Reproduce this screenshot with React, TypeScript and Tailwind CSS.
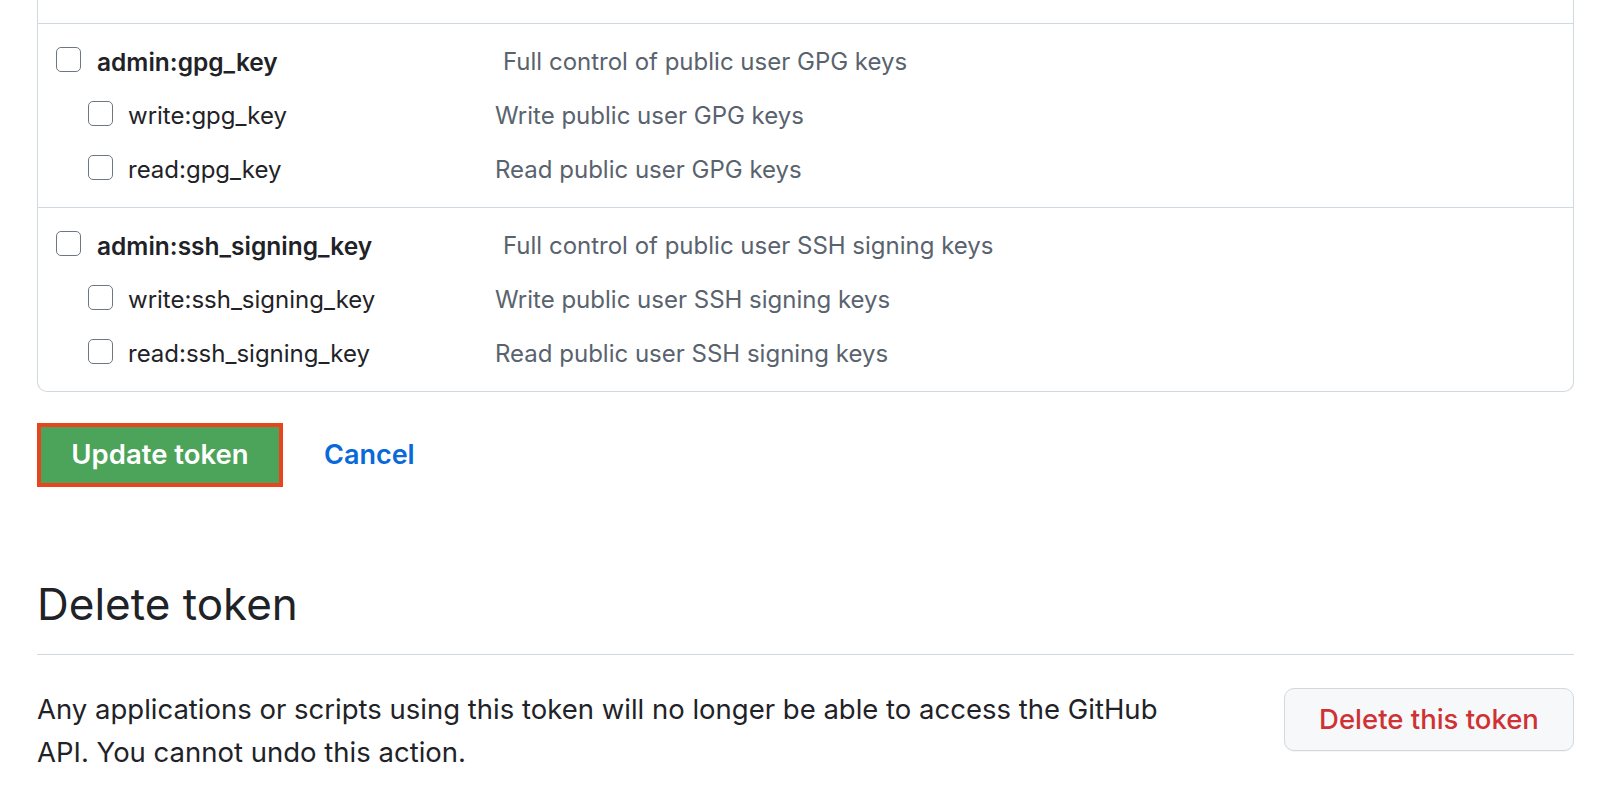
import React from "react";

type Scope = { name: string; desc: string; children: { name: string; desc: string }[] };

const scopes: Scope[] = [
  {
    name: "admin:gpg_key",
    desc: "Full control of public user GPG keys",
    children: [
      { name: "write:gpg_key", desc: "Write public user GPG keys" },
      { name: "read:gpg_key", desc: "Read public user GPG keys" },
    ],
  },
  {
    name: "admin:ssh_signing_key",
    desc: "Full control of public user SSH signing keys",
    children: [
      { name: "write:ssh_signing_key", desc: "Write public user SSH signing keys" },
      { name: "read:ssh_signing_key", desc: "Read public user SSH signing keys" },
    ],
  },
];

function Checkbox() {
  return <span className="mb-[6px] block h-[25px] w-[25px] shrink-0 rounded-[5px] border-[1.5px] border-[#6e7781] bg-white" />;
}

function ScopeGroup({ scope }: { scope: Scope }) {
  return (
    <div className="border-t border-[#d1d9e0] pt-[11px] pb-[10px]">
      <div className="flex h-[54px] items-center">
        <div className="flex w-[465px] items-center gap-[16px] pl-[18px]">
          <Checkbox />
          <span className="text-[24.5px] font-semibold text-[#1f2328]">{scope.name}</span>
        </div>
        <span className="text-[#59636e]">{scope.desc}</span>
      </div>
      {scope.children.map((child) => (
        <div key={child.name} className="flex h-[54px] items-center">
          <div className="flex w-[457px] items-center gap-[15px] pl-[50px]">
            <Checkbox />
            <span className="text-[#1f2328]">{child.name}</span>
          </div>
          <span className="text-[#59636e]">{child.desc}</span>
        </div>
      ))}
    </div>
  );
}

export default function App() {
  return (
    <div className="h-[788px] w-full overflow-hidden bg-white pl-[37px] pr-[24px] font-['Inter',sans-serif] text-[24px]">
      <div className="rounded-b-[10px] border border-t-0 border-[#d1d9e0]">
        <div className="h-[23px]" />
        {scopes.map((scope) => (
          <ScopeGroup key={scope.name} scope={scope} />
        ))}
      </div>

      <div className="mt-[31px] flex items-center gap-[41px]">
        <button
          type="button"
          className="flex h-[64px] w-[246px] items-center justify-center border-[4px] border-[#e8451f] bg-[#4ca35a] text-[27.5px] font-semibold text-white"
        >
          Update token
        </button>
        <a href="#" className="text-[27px] font-semibold text-[#0969da]">
          Cancel
        </a>
      </div>

      <h2 className="mt-[89px] border-b border-[#d1d9e0] pb-[22px] text-[44px] leading-[56px] font-normal text-[#1f2328]">
        Delete token
      </h2>

      <div className="mt-[33px] flex items-start justify-between">
        <p className="w-[1160px] text-[27.5px] leading-[43px] text-[#1f2328]">
          Any applications or scripts using this token will no longer be able to access the GitHub API. You cannot undo
          this action.
        </p>
        <button
          type="button"
          className="h-[63px] w-[290px] rounded-[10px] border-[1.5px] border-[#d1d9e0] bg-[#f6f8fa] text-[27.5px] font-medium text-[#cf3234] shadow-[0_1px_0_rgba(31,35,40,0.04)]"
        >
          Delete this token
        </button>
      </div>
    </div>
  );
}
